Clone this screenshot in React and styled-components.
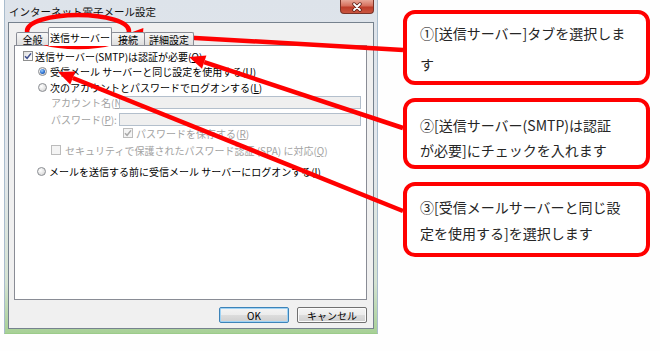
import styled, { createGlobalStyle } from "styled-components";

const GlobalStyle = createGlobalStyle`
  html, body {
    margin: 0;
    padding: 0;
    background: #fefefe;
  }
  body {
    font-family: "Noto Sans CJK JP", "Noto Sans", sans-serif;
  }
`;

const Page = styled.div`
  position: relative;
  width: 660px;
  height: 351px;
  overflow: hidden;
  display: flex;
  align-items: flex-start;
  background: #fefefe;
`;

/* ---------- dialog window ---------- */

const Window = styled.div`
  margin-left: 4px;
  width: 374px;
  height: 334px;
  box-sizing: border-box;
  padding: 0 3px 4px;
  display: flex;
  flex-direction: column;
  background: linear-gradient(
    to bottom,
    #dde3ea 0%,
    #e3e7ec 50%,
    #d4e2d2 85%,
    #a7d096 100%
  );
  border-left: 1px solid #a9bccd;
  border-right: 1px solid #a9bccd;
  border-bottom: 1px solid #9ccb8a;
`;

const TitleBar = styled.div`
  height: 22px;
  display: flex;
  align-items: flex-start;
`;

const Title = styled.div`
  padding: 1px 0 0 1px;
  line-height: 22px;
  font-size: 10.5px;
  color: #111;
  white-space: nowrap;
`;

const CloseBtn = styled.div`
  margin-left: auto;
  margin-right: 0;
  width: 34px;
  height: 14px;
  box-sizing: border-box;
  border: 1px solid #7a3328;
  border-top: none;
  border-radius: 0 0 4px 4px;
  background: linear-gradient(to bottom, #e8a798 0%, #d6705d 45%, #bd3d2a 55%, #c9553f 100%);
  display: flex;
  align-items: center;
  justify-content: center;
`;

const Body = styled.div`
  flex: 1;
  background: #f0f0f0;
  border: 1px solid #76828e;
  display: flex;
  flex-direction: column;
  padding: 4px 6px 0 5px;
`;

const TabRow = styled.div`
  display: flex;
  align-items: flex-end;
  height: 19px;
  padding-left: 2px;
  margin-bottom: -1px;
  position: relative;
  z-index: 1;
`;

const Tab = styled.div`
  box-sizing: border-box;
  width: ${(p) => p.$w}px;
  height: ${(p) => (p.$active ? 19 : 13)}px;
  margin-bottom: ${(p) => (p.$active ? 0 : 1)}px;
  margin-left: -1px;
  &:first-child {
    margin-left: 0;
  }
  border: 1px solid #898c95;
  border-bottom: none;
  border-radius: 2px 2px 0 0;
  background: ${(p) =>
    p.$active ? "#fff" : "linear-gradient(to bottom, #f7f7f7 0%, #ebebeb 50%, #dedede 100%)"};
  position: relative;
  z-index: ${(p) => (p.$active ? 2 : 1)};
  display: flex;
  align-items: center;
  justify-content: center;
  font-size: 10px;
  color: #000;
  white-space: nowrap;
`;

const Panel = styled.div`
  height: 255px;
  box-sizing: border-box;
  border: 1px solid #898c95;
  background: #fff;
  display: flex;
  flex-direction: column;
`;

const Row = styled.div`
  height: 14px;
  margin-top: ${(p) => p.$mt}px;
  padding-left: ${(p) => p.$pl}px;
  display: flex;
  align-items: center;
  font-size: 10px;
  color: ${(p) => (p.$disabled ? "#a2a2a2" : "#000")};
  white-space: nowrap;
`;

const Label = styled.span`
  margin-left: ${(p) => p.$gap || 0}px;
  width: ${(p) => (p.$w ? `${p.$w}px` : "auto")};
  flex: none;
`;

const Key = styled.span`
  text-decoration: underline;
`;

const Box = styled.span`
  width: 10px;
  height: 10px;
  box-sizing: border-box;
  border: 1px solid ${(p) => (p.$disabled ? "#bcbcbc" : "#8e8f8f")};
  background: ${(p) =>
    p.$disabled ? "#f4f4f4" : "linear-gradient(135deg, #dcdcdc 0%, #f6f6f6 60%, #ffffff 100%)"};
  display: flex;
  align-items: center;
  justify-content: center;
  flex: none;
`;

const Radio = styled.span`
  width: 9px;
  height: 9px;
  box-sizing: border-box;
  border-radius: 50%;
  border: 1px solid #8a8d92;
  background: radial-gradient(circle at 35% 35%, #ffffff 0%, #e2e2e2 60%, #c8c8c8 100%);
  display: flex;
  align-items: center;
  justify-content: center;
  flex: none;
  &::after {
    content: "";
    display: ${(p) => (p.$on ? "block" : "none")};
    width: 5px;
    height: 5px;
    border-radius: 50%;
    background: radial-gradient(circle at 40% 35%, #9ed0ff 0%, #2a6fd0 55%, #123d8a 100%);
  }
`;

const Field = styled.div`
  width: 242px;
  height: 13px;
  box-sizing: border-box;
  border: 1px solid #b3bfcc;
  background: #efefef;
  flex: none;
`;

const ButtonRow = styled.div`
  display: flex;
  justify-content: flex-end;
  gap: 8px;
  margin-top: 7px;
`;

const Button = styled.div`
  width: 70px;
  height: 16px;
  box-sizing: border-box;
  border: 1px solid ${(p) => (p.$primary ? "#3d83b8" : "#707070")};
  border-radius: 2px;
  background: linear-gradient(to bottom, #f4f4f4 0%, #ececec 48%, #dcdcdc 52%, #cfcfcf 100%);
  box-shadow: ${(p) => (p.$primary ? "inset 0 0 0 1px #9fd3f5" : "inset 0 0 0 1px #fbfbfb")};
  display: flex;
  align-items: center;
  justify-content: center;
  font-size: 10px;
  color: #000;
`;

/* ---------- callouts ---------- */

const Callouts = styled.div`
  margin-left: 25px;
  padding-top: 10px;
  display: flex;
  flex-direction: column;
  gap: 13px;
`;

const Callout = styled.div`
  width: 247px;
  height: ${(p) => p.$h}px;
  box-sizing: border-box;
  border: 4px solid #ff0000;
  border-radius: 12px;
  background: #fff;
  padding: ${(p) => p.$pt}px 8px 0 13px;
  font-size: 14px;
  line-height: ${(p) => p.$lh}px;
  color: #262626;
`;

const Line = styled.div`
  white-space: nowrap;
`;

/* ---------- red annotation layer ---------- */

const Overlay = styled.svg`
  position: absolute;
  left: 0;
  top: 0;
  pointer-events: none;
`;

function Check({ disabled }) {
  return (
    <svg width="8" height="8" viewBox="0 0 8 8">
      <path
        d="M1 4.2 L3.1 6.3 L7 1.4"
        fill="none"
        stroke={disabled ? "#a9a9a9" : "#3f4f8f"}
        strokeWidth="1.5"
      />
    </svg>
  );
}

function CheckBox({ checked, disabled }) {
  return <Box $disabled={disabled}>{checked && <Check disabled={disabled} />}</Box>;
}

function Arrow({ from, to }) {
  const [x1, y1] = from;
  const [x2, y2] = to;
  const a = Math.atan2(y2 - y1, x2 - x1);
  const len = 16;
  const half = 7;
  const bx = x2 - len * Math.cos(a);
  const by = y2 - len * Math.sin(a);
  const px = -Math.sin(a) * half;
  const py = Math.cos(a) * half;
  return (
    <g>
      <line x1={x1} y1={y1} x2={bx} y2={by} stroke="#ff0000" strokeWidth="4.5" />
      <polygon
        points={`${x2},${y2} ${bx + px},${by + py} ${bx - px},${by - py}`}
        fill="#ff0000"
      />
    </g>
  );
}

export default function App() {
  return (
    <Page>
      <GlobalStyle />
      <Window>
        <TitleBar>
          <Title>インターネット電子メール設定</Title>
          <CloseBtn>
            <svg width="12" height="10" viewBox="0 0 12 10">
              <path d="M3 2 L9 8 M9 2 L3 8" stroke="#5a2018" strokeWidth="3.4" strokeLinecap="round" />
              <path d="M3 2 L9 8 M9 2 L3 8" stroke="#fff" strokeWidth="1.8" strokeLinecap="round" />
            </svg>
          </CloseBtn>
        </TitleBar>
        <Body>
          <TabRow>
            <Tab $w={33}>全般</Tab>
            <Tab $w={64} $active>
              送信サーバー
            </Tab>
            <Tab $w={34}>接続</Tab>
            <Tab $w={50}>詳細設定</Tab>
          </TabRow>
          <Panel>
            <Row $mt={3} $pl={8}>
              <CheckBox checked />
              <Label $gap={2}>
                送信サーバー(SMTP)は認証が必要(<Key>O</Key>)
              </Label>
            </Row>
            <Row $mt={1} $pl={23}>
              <Radio $on />
              <Label $gap={3}>
                受信メール サーバーと同じ設定を使用する(<Key>U</Key>)
              </Label>
            </Row>
            <Row $mt={2} $pl={23}>
              <Radio />
              <Label $gap={3}>
                次のアカウントとパスワードでログオンする(<Key>L</Key>)
              </Label>
            </Row>
            <Row $mt={1} $pl={36} $disabled>
              <Label $w={68}>
                アカウント名(<Key>N</Key>):
              </Label>
              <Field />
            </Row>
            <Row $mt={3} $pl={36} $disabled>
              <Label $w={68}>
                パスワード(<Key>P</Key>):
              </Label>
              <Field />
            </Row>
            <Row $mt={0} $pl={108} $disabled>
              <CheckBox checked disabled />
              <Label $gap={3}>
                パスワードを保存する(<Key>R</Key>)
              </Label>
            </Row>
            <Row $mt={3} $pl={36} $disabled>
              <CheckBox disabled />
              <Label $gap={4}>
                セキュリティで保護されたパスワード認証 (SPA) に対応(<Key>Q</Key>)
              </Label>
            </Row>
            <Row $mt={7} $pl={22}>
              <Radio />
              <Label $gap={3}>
                メールを送信する前に受信メール サーバーにログオンする(<Key>I</Key>)
              </Label>
            </Row>
          </Panel>
          <ButtonRow>
            <Button $primary>OK</Button>
            <Button>キャンセル</Button>
          </ButtonRow>
        </Body>
      </Window>

      <Callouts>
        <Callout $h={75} $pt={4} $lh={31}>
          <Line>①[送信サーバー]タブを選択しま</Line>
          <Line>す</Line>
        </Callout>
        <Callout $h={71} $pt={11} $lh={25}>
          <Line>②[送信サーバー(SMTP)は認証</Line>
          <Line>が必要]にチェックを入れます</Line>
        </Callout>
        <Callout $h={75} $pt={8} $lh={26}>
          <Line>③[受信メールサーバーと同じ設</Line>
          <Line>定を使用する]を選択します</Line>
        </Callout>
      </Callouts>

      <Overlay width="660" height="351" viewBox="0 0 660 351">
        <ellipse cx="78" cy="31" rx="51" ry="16" fill="none" stroke="#ff0000" strokeWidth="4.5" />
        <Arrow from={[403, 50]} to={[127, 34]} />
        <Arrow from={[403, 128]} to={[189, 57]} />
        <Arrow from={[403, 211]} to={[58, 72]} />
      </Overlay>
    </Page>
  );
}
